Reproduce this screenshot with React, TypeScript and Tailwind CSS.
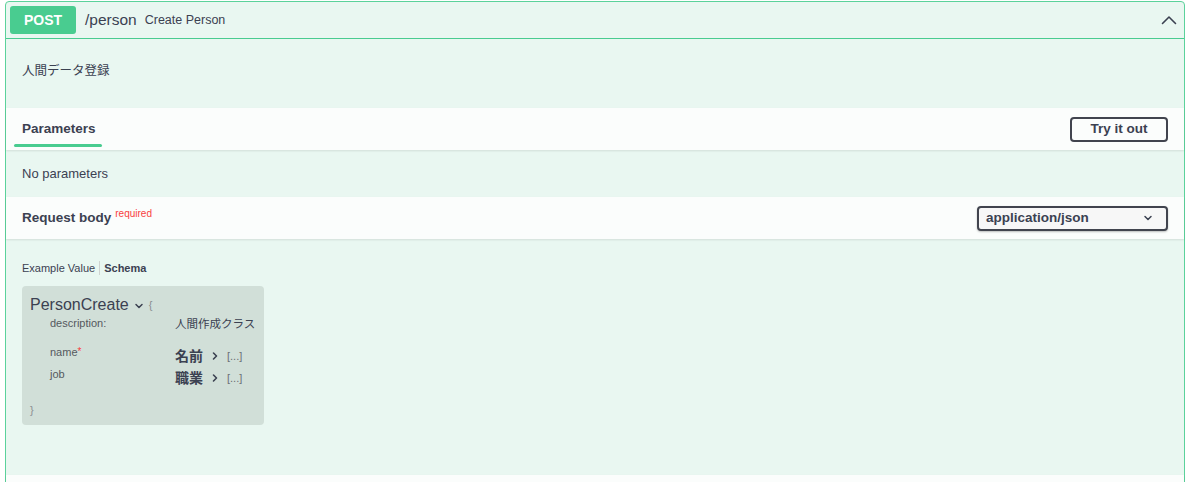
import { ChevronDown, ChevronRight } from "lucide-react";

const font = { fontFamily: '"Liberation Sans", "Noto Sans CJK JP", sans-serif' };

const ChevronUpIcon = () => (
  <svg width="16" height="10" viewBox="0 0 16 10" className="text-[#3b4151]">
    <path d="M1.5 8.5 L8 2 L14.5 8.5" fill="none" stroke="currentColor" strokeWidth="1.6" strokeLinecap="round" strokeLinejoin="round" />
  </svg>
);

const SchemaRow = ({ label, required, value }: { label: string; required?: boolean; value: string }) => (
  <div className="flex items-start h-[22px]">
    <div className="w-[145px] pl-[20px] text-[11px] text-[#55595e] leading-[14px]">
      {label}
      {required && <span className="text-[#f93e3e] text-[10px] align-top">*</span>}
    </div>
    <div className="flex items-center gap-[6px] mt-[3px]">
      <span className="text-[14px] font-bold text-[#3b4151] leading-[16px]">{value}</span>
      <ChevronRight size={12} strokeWidth={3.2} className="text-[#3b4151]" />
      <span className="text-[11px] text-[#6b6f75]">[...]</span>
    </div>
  </div>
);

export default function App() {
  return (
    <div className="w-full h-[482px] bg-white overflow-hidden pl-[5px] pr-[15px] pt-px" style={font}>
      <div className="border border-[#5bd29b] rounded-[4px] bg-[#e9f7f1] h-[600px]">
        {/* summary */}
        <div className="h-[37px] flex items-center pl-[4px] pr-[7px] border-b border-[#49cc90]">
          <div className="w-[66px] h-[28px] rounded-[3px] bg-[#49cc90] text-white font-bold text-[14px] flex items-center justify-center">
            POST
          </div>
          <span className="ml-[9px] text-[15.5px] text-[#3b4151]">/person</span>
          <span className="ml-[8px] text-[12.5px] text-[#3b4151]">Create Person</span>
          <div className="ml-auto">
            <ChevronUpIcon />
          </div>
        </div>

        {/* description */}
        <div className="h-[69px] px-4 pt-[23px] text-[12.5px] text-[#3b4151]">人間データ登録</div>

        {/* parameters header */}
        <div className="h-[42px] bg-white/80 shadow-[0_1px_2px_rgba(0,0,0,0.1)] flex items-center pl-[8px] pr-[16px]">
          <div className="h-full flex flex-col justify-end">
            <div className="px-[8px] text-[13.5px] font-bold text-[#3b4151] leading-[16px] mb-[7px]">Parameters</div>
            <div className="h-[3px] w-[88px] bg-[#49cc90] rounded-full mb-[3px]" />
          </div>
          <button className="ml-auto w-[98px] h-[25px] border-2 border-[#41444e] rounded-[4px] text-[13.5px] font-bold text-[#3b4151] flex items-center justify-center bg-transparent">
            Try it out
          </button>
        </div>

        {/* no params */}
        <div className="h-[47px] px-4 flex items-center text-[13px] text-[#3b4151]">No parameters</div>

        {/* request body header */}
        <div className="h-[42px] bg-white/80 shadow-[0_1px_2px_rgba(0,0,0,0.1)] flex items-center pl-4 pr-[16px]">
          <span className="text-[13.5px] font-bold text-[#3b4151]">Request body</span>
          <span className="ml-[4px] -mt-[9px] text-[10px] text-[#f93e3e]">required</span>
          <div className="ml-auto w-[191px] h-[25px] border-2 border-[#41444e] rounded-[4px] bg-[#f7f7f7] flex items-center pl-[7px] pr-[12px] shadow-[0_1px_2px_rgba(0,0,0,0.25)]">
            <span className="text-[13.5px] font-bold text-[#3b4151]">application/json</span>
            <ChevronDown size={12} strokeWidth={3} className="ml-auto text-[#3b4151]" />
          </div>
        </div>

        {/* body */}
        <div className="h-[236px] px-4 pt-[22px]">
          <div className="flex items-center text-[11px] text-[#3b4151] h-[14px]">
            <span>Example Value</span>
            <span className="mx-[4px] h-[14px] w-px bg-[#cfd3d1]" />
            <span className="font-bold">Schema</span>
          </div>
          <div className="mt-[11px] w-[242px] h-[139px] rounded-[4px] bg-[#d1dfd8] pt-[9px] pl-[8px]">
            <div className="flex items-center h-[20px]">
              <span className="text-[16px] text-[#3b4151]">PersonCreate</span>
              <ChevronDown size={12} strokeWidth={3} className="ml-[4px] mt-[2px] text-[#3b4151]" />
              <span className="ml-[4px] text-[11px] text-[#8a8e92]">{"{"}</span>
            </div>
            <div className="flex items-start h-[30px]">
              <div className="w-[145px] pl-[20px] text-[11px] text-[#55595e]">description:</div>
              <div className="text-[11.5px] text-[#3b4151] mt-[1px]">人間作成クラス</div>
            </div>
            <SchemaRow label="name" required value="名前" />
            <SchemaRow label="job" value="職業" />
            <div className="mt-[13px] text-[11px] text-[#8a8e92]">{"}"}</div>
          </div>
        </div>

        <div className="h-[60px] bg-white/80 shadow-[0_1px_2px_rgba(0,0,0,0.1)]" />
      </div>
    </div>
  );
}
